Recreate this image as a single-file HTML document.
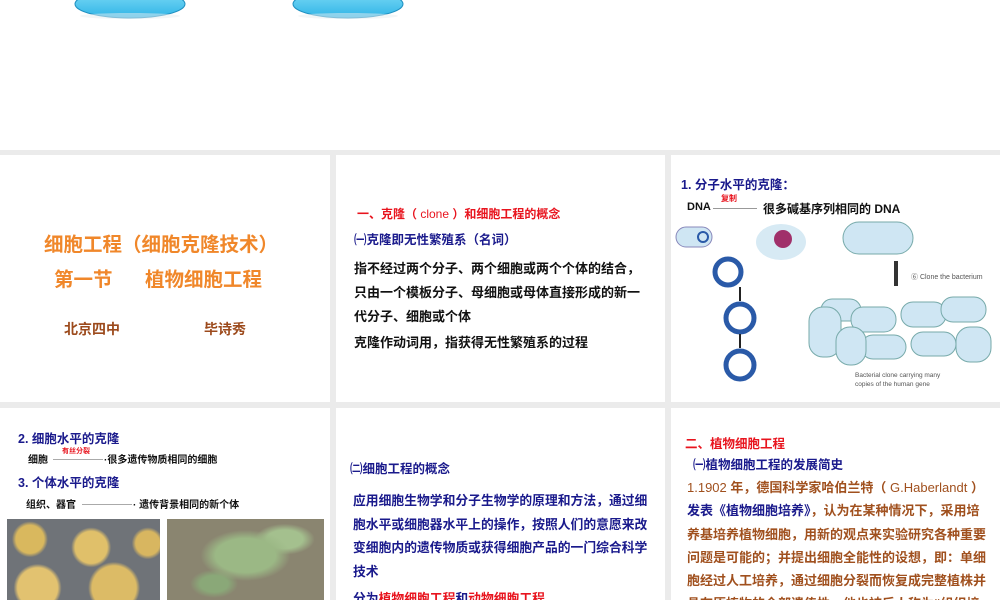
<!DOCTYPE html>
<html><head><meta charset="utf-8"><style>
*{margin:0;padding:0;box-sizing:border-box}
body{width:1000px;height:600px;overflow:hidden;background:#fff;position:relative;font-family:"Liberation Sans","Noto Sans CJK SC",sans-serif;font-weight:bold}
.gray{position:absolute;left:0;top:150px;width:1000px;height:450px;background:#ebebeb}
.p{position:absolute;background:#fff;overflow:hidden}
.t{position:absolute;white-space:nowrap}
.b{color:#1a1a8c}.r{color:#e8141e}.k{color:#111}.o{color:#a0501e}
.n{font-weight:normal}
</style></head><body>
<svg style="position:absolute;left:0;top:0" width="500" height="25">
<defs><linearGradient id="g" x1="0" y1="0" x2="0" y2="1"><stop offset="0" stop-color="#7fdcf7"/><stop offset="1" stop-color="#2fb4e6"/></linearGradient></defs>
<ellipse cx="130" cy="4" rx="55" ry="14" fill="url(#g)" stroke="#1e8fc0"/>
<ellipse cx="130" cy="16" rx="50" ry="3" fill="#e8eef0" opacity=".5"/>
<ellipse cx="348" cy="4" rx="55" ry="14" fill="url(#g)" stroke="#1e8fc0"/>
<ellipse cx="348" cy="16" rx="50" ry="3" fill="#e8eef0" opacity=".5"/>
</svg>
<div class="gray"></div>

<div class="p" style="left:0;top:155px;width:330px;height:247px">
<div class="t" style="left:44px;top:73px;font-size:19.5px;color:#f0872a">细胞工程（细胞克隆技术）</div>
<div class="t" style="left:54px;top:108px;font-size:19.5px;color:#f0872a">第一节&nbsp;&nbsp;&nbsp;&nbsp;&nbsp;&nbsp;植物细胞工程</div>
<div class="t" style="left:64px;top:164px;font-size:14px;color:#9c4a1c">北京四中</div>
<div class="t" style="left:204px;top:164px;font-size:14px;color:#9c4a1c">毕诗秀</div>
</div>

<div class="p" style="left:336px;top:155px;width:329px;height:247px">
<div class="t r" style="left:21px;top:50px;font-size:12px">一、克隆（ <span class="n">clone</span> ）和细胞工程的概念</div>
<div class="t b" style="left:18px;top:74px;font-size:12.5px">㈠克隆即无性繁殖系（名词）</div>
<div class="t k" style="left:18px;top:102px;font-size:13px;line-height:24px">指不经过两个分子、两个细胞或两个个体的结合，<br>只由一个模板分子、母细胞或母体直接形成的新一<br>代分子、细胞或个体</div>
<div class="t k" style="left:18px;top:177px;font-size:13px">克隆作动词用，指获得无性繁殖系的过程</div>
</div>

<div class="p" style="left:671px;top:155px;width:329px;height:247px">
<div class="t b" style="left:10px;top:19px;font-size:12.5px">1. 分子水平的克隆：</div>
<div class="t r" style="left:50px;top:38px;font-size:8px">复制</div>
<div class="t k" style="left:16px;top:46px;font-size:11px">DNA</div>
<div style="position:absolute;left:42px;top:53px;width:44px;border-top:1px solid #999"></div>
<div class="t k" style="left:92px;top:45px;font-size:12px">很多碱基序列相同的 DNA</div>
<svg style="position:absolute;left:0;top:62px" width="329" height="185">
<rect x="5" y="10" width="36" height="20" rx="10" fill="#cfe6f3" stroke="#88b"/>
<circle cx="32" cy="20" r="5" fill="none" stroke="#2a5aa8" stroke-width="2"/>
<ellipse cx="110" cy="25" rx="25" ry="18" fill="#d7eaf4"/>
<circle cx="112" cy="22" r="9" fill="#a0306a"/>
<g fill="none" stroke="#2a5aa8" stroke-width="5">
<circle cx="57" cy="55" r="13"/><circle cx="69" cy="101" r="14"/><circle cx="69" cy="148" r="14"/>
<circle cx="211" cy="23" r="8"/></g>
<path d="M69 70v14M69 117v14" stroke="#222" stroke-width="2"/>
<rect x="172" y="5" width="70" height="32" rx="16" fill="#cfe6f3" stroke="#7aa"/>
<path d="M225 44v25" stroke="#333" stroke-width="4"/>
<text x="240" y="62" font-size="7" fill="#555" font-weight="normal">⑥ Clone the bacterium</text>
<g fill="#cfe6f3" stroke="#7aa">
<rect x="150" y="82" width="40" height="22" rx="11"/><rect x="180" y="90" width="45" height="25" rx="12"/>
<rect x="230" y="85" width="45" height="25" rx="12"/><rect x="270" y="80" width="45" height="25" rx="12"/>
<rect x="190" y="118" width="45" height="24" rx="12"/><rect x="240" y="115" width="45" height="24" rx="12"/>
<rect x="285" y="110" width="35" height="35" rx="14"/>
<rect x="138" y="90" width="32" height="50" rx="14"/><rect x="165" y="110" width="30" height="38" rx="14"/>
</g>
<text x="184" y="160" font-size="6.5" fill="#555" font-weight="normal">Bacterial clone carrying many</text>
<text x="184" y="169" font-size="6.5" fill="#555" font-weight="normal">copies of the human gene</text>
</svg>
</div>

<div class="p" style="left:0;top:408px;width:330px;height:192px">
<div class="t b" style="left:18px;top:20px;font-size:12.5px">2. 细胞水平的克隆</div>
<div class="t r" style="left:62px;top:38px;font-size:7px">有丝分裂</div>
<div class="t k" style="left:28px;top:43px;font-size:10px">细胞</div>
<div style="position:absolute;left:53px;top:51px;width:50px;border-top:1px solid #aaa"></div>
<div class="t k" style="left:104px;top:43px;font-size:10px">·很多遗传物质相同的细胞</div>
<div class="t b" style="left:18px;top:64px;font-size:12.5px">3. 个体水平的克隆</div>
<div class="t k" style="left:26px;top:88px;font-size:10px">组织、器官</div>
<div style="position:absolute;left:82px;top:96px;width:50px;border-top:1px solid #aaa"></div>
<div class="t k" style="left:133px;top:88px;font-size:10px">· 遗传背景相同的新个体</div>
<div style="position:absolute;left:7px;top:111px;width:153px;height:81px;background:radial-gradient(circle at 15% 25%,#d9b85e 0 14px,transparent 18px),radial-gradient(circle at 55% 35%,#e0c06a 0 16px,transparent 20px),radial-gradient(circle at 20% 85%,#e2c270 0 20px,transparent 24px),radial-gradient(circle at 70% 85%,#dcbb66 0 22px,transparent 26px),radial-gradient(circle at 92% 30%,#d8b660 0 12px,transparent 16px),#6f7378"></div>
<div style="position:absolute;left:167px;top:111px;width:157px;height:81px;background:radial-gradient(ellipse at 50% 45%,#9bb885 0 30px,transparent 45px),radial-gradient(ellipse at 75% 25%,#a4c08e 0 18px,transparent 30px),radial-gradient(ellipse at 30% 80%,#8aa878 0 14px,transparent 24px),#8a8570"></div>
</div>

<div class="p" style="left:336px;top:408px;width:329px;height:192px">
<div class="t b" style="left:14px;top:50px;font-size:12.5px">㈡细胞工程的概念</div>
<div class="t b" style="left:17px;top:81px;font-size:12.8px;line-height:23.5px">应用细胞生物学和分子生物学的原理和方法，通过细<br>胞水平或细胞器水平上的操作，按照人们的意愿来改<br>变细胞内的遗传物质或获得细胞产品的一门综合科学<br>技术</div>
<div class="t b" style="left:17px;top:180px;font-size:12.8px">分为<span class="r">植物细胞工程</span>和<span class="r">动物细胞工程</span></div>
</div>

<div class="p" style="left:671px;top:408px;width:329px;height:192px">
<div class="t r" style="left:14px;top:25px;font-size:12.5px">二、植物细胞工程</div>
<div class="t b" style="left:22px;top:46px;font-size:12.5px">㈠植物细胞工程的发展简史</div>
<div class="t o" style="left:16px;top:68px;font-size:13px;line-height:23.3px"><span class="n">1.1902</span> 年，德国科学家哈伯兰特（ <span class="n">G.Haberlandt</span> ）<br><span class="b">发表《植物细胞培养》</span>，认为在某种情况下，采用培<br>养基培养植物细胞，用新的观点来实验研究各种重要<br>问题是可能的；并提出细胞全能性的设想，即：单细<br>胞经过人工培养，通过细胞分裂而恢复成完整植株并<br>具有原植物的全部遗传性，他也被后人称为“组织培</div>
</div>
</body></html>
